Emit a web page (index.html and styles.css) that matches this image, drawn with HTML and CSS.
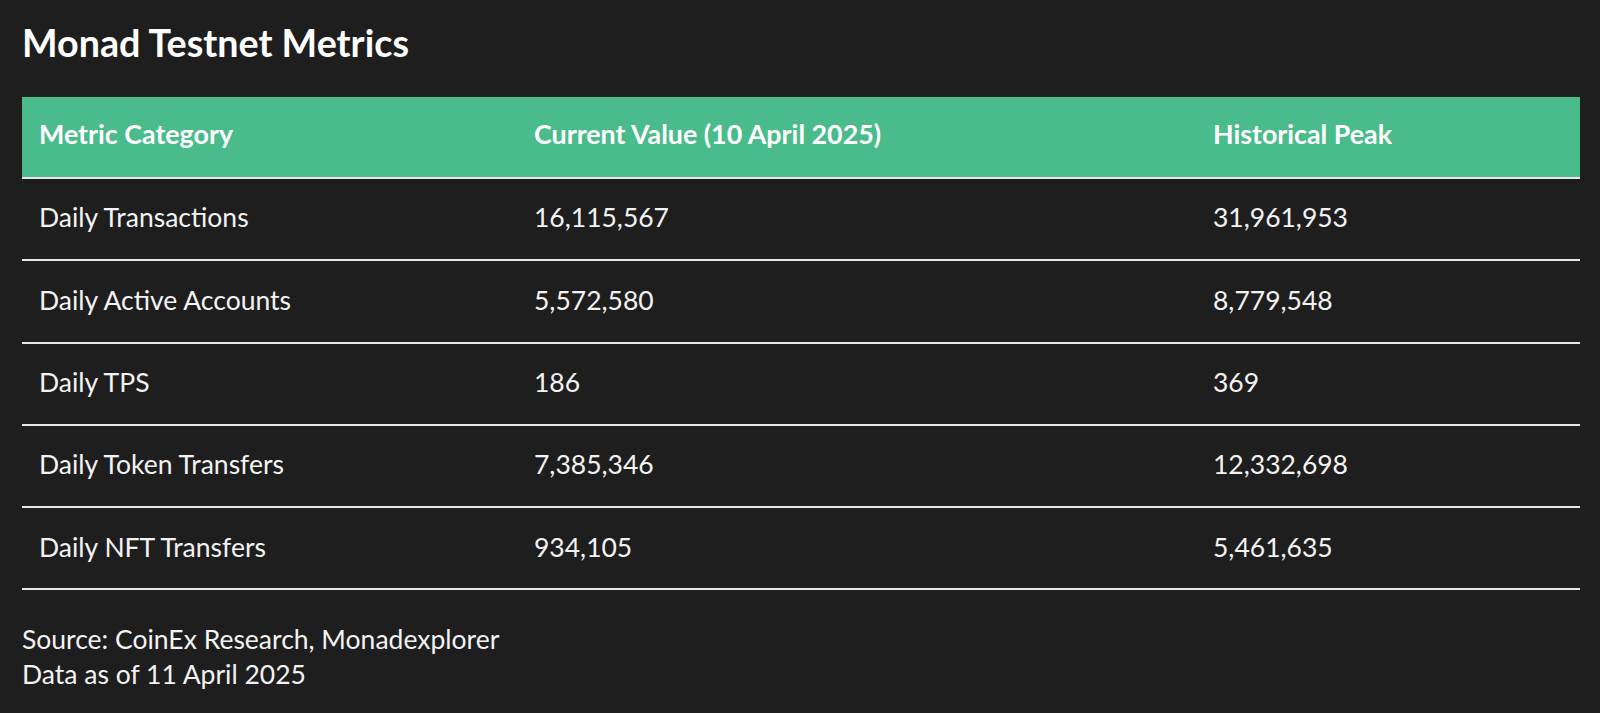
FILE: index.html
```html
<!DOCTYPE html>
<html lang="en">
<head>
<meta charset="utf-8">
<title>Monad Testnet Metrics</title>
<link rel="stylesheet" href="styles.css">
</head>
<body>
<main class="page">
  <h1 class="title">Monad Testnet Metrics</h1>
  <table class="metrics">
    <colgroup>
      <col class="col-cat">
      <col class="col-cur">
      <col class="col-peak">
    </colgroup>
    <thead>
      <tr>
        <th>Metric Category</th>
        <th>Current Value (10 April 2025)</th>
        <th>Historical Peak</th>
      </tr>
    </thead>
    <tbody>
      <tr><td>Daily Transactions</td><td>16,115,567</td><td>31,961,953</td></tr>
      <tr><td>Daily Active Accounts</td><td>5,572,580</td><td>8,779,548</td></tr>
      <tr><td>Daily TPS</td><td>186</td><td>369</td></tr>
      <tr><td>Daily Token Transfers</td><td>7,385,346</td><td>12,332,698</td></tr>
      <tr><td>Daily NFT Transfers</td><td>934,105</td><td>5,461,635</td></tr>
    </tbody>
  </table>
  <p class="note">Source: CoinEx Research, Monadexplorer<br>Data as of 11 April 2025</p>
</main>
</body>
</html>
```
FILE: styles.css
```css
html, body {
  margin: 0;
  background: #1e1e1e;
}

body {
  font-family: "Lato", "Liberation Sans", sans-serif;
  color: #f3f3f3;
  height: 713px;
  overflow: hidden;
}

.page {
  padding: 20px 20px 0 22px;
}

.title {
  margin: 0 0 31.3px 0;
  font-size: 37.7px;
  line-height: 46px;
  font-weight: 700;
  color: #ffffff;
}

.metrics {
  width: 1558px;
  border-collapse: collapse;
  table-layout: fixed;
}

.col-cat { width: 495px; }
.col-cur { width: 679px; }
.col-peak { width: 384px; }

.metrics th {
  background: #4abb8b;
  color: #ffffff;
  text-align: left;
  font-size: 26.8px;
  font-weight: 700;
  line-height: 33px;
  padding: 20.6px 17px 26.1px 17px;
  border-bottom: 2px solid #e6e6e6;
}

.metrics td {
  font-size: 26.5px;
  font-weight: 400;
  line-height: 33px;
  padding: 22.4px 17px 24.9px 17px;
  border-bottom: 2px solid #e6e6e6;
  color: #f3f3f3;
}

.note {
  margin: 32px 0 0 0;
  font-size: 26.5px;
  line-height: 35px;
  color: #f3f3f3;
}
```
